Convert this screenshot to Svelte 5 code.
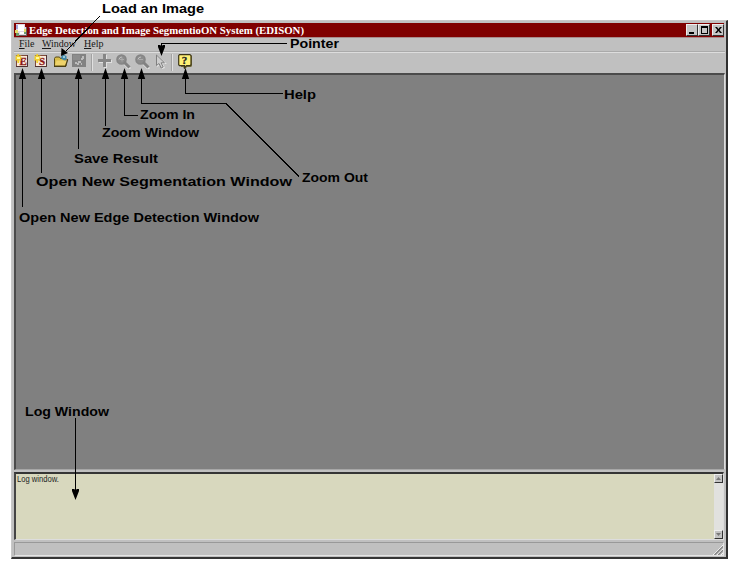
<script>
  const labels = [
    ['Load an Image', 102, 13, 102],
    ['Pointer', 290, 48, 49],
    ['Help', 284, 99, 32],
    ['Zoom In', 140, 119, 55],
    ['Zoom Window', 102, 137, 97],
    ['Save Result', 74, 163, 84],
    ['Open New Segmentation Window', 36, 186, 256],
    ['Zoom Out', 302, 182, 66],
    ['Open New Edge Detection Window', 19, 222, 240],
    ['Log Window', 25, 416, 84]
  ];
  const lines = [
    'M22.5 207V76', 'M41.5 173V76', 'M78.5 149V76', 'M105.5 126V76',
    'M138 115.5H124.5V76', 'M299 176.5L226 103.5H141.5V76',
    'M283 93.5H185.5V76', 'M287 43.5H161.5V50', 'M100 16L66 51', 'M75.5 418V492'
  ];
  const upArrows = [22.5, 41.5, 78.5, 105.5, 124.5, 141.5, 185.5];
</script>

<main>
  <div class="window">
    <header class="titlebar">
      <svg class="appicon" width="13" height="12" viewBox="0 0 13 12">
        <path fill="#e3d8e4" d="M1 0h9v3h2v8H3V9H1z" /><path fill="#fff" d="M3 1h6v6H3zM5 8h5v2H5z" />
        <path fill="#a5aadc" d="M1 1h2v4H1z" /><path fill="#e4dc68" d="M0 6h3v3H0zM9 5h2v3H9z" />
        <path fill="#6e9c70" d="M1 9h3v3H1zM9 8h2v2H9z" /><path fill="#665c5c" d="M11 3h1v8h-1zM4 11h8v1H4z" />
      </svg>
      <svg class="title" width="280" height="14"><text x="0" y="11" textLength="275" lengthAdjust="spacingAndGlyphs">Edge Detection and Image SegmentioON System (EDISON)</text></svg>
      <div class="controls">
        <button aria-label="Minimize"><svg viewBox="0 0 9 8"><path d="M1 6h5v2H1z" /></svg></button>
        <button aria-label="Maximize"><svg viewBox="0 0 9 8"><path fill-rule="evenodd" d="M1 0h7v8H1zM2 2v5h5V2z" /></svg></button>
        <button class="close" aria-label="Close"><svg viewBox="0 0 9 8"><path d="M1 1h2l1.5 2L6 1h2L5.5 4 8 7H6L4.5 5 3 7H1l2.5-3z" /></svg></button>
      </div>
    </header>
    <nav>
      <span class="file"><u>F</u>ile</span><span class="win"><u>W</u>indow</span><span><u>H</u>elp</span>
    </nav>
    <div class="toolbar">
      {#each ['E', 'S'] as letter}
        <span class="tool"><svg width="14" height="14" viewBox="0 0 14 14">
          <path fill="#fbead8" stroke="#7d4a3c" d="M1.5 1.5h11v11h-11z" />
          <path stroke="#4d3030" fill="none" d="M1 12.5h11.5V1" />
          <text x={letter === 'E' ? 4.6 : 5} y="11" class="letter">{letter}</text>
          <path fill="#f0d02f" d="M2.5 0h1.5l.5 2 2-1-1 2.3 2 .7-2 1 1 2-2-.7-.5 2.7H2.5L2 6.3 0 7l.8-2L0 4l1-1-.8-2L2 2z" />
          <path fill="#fff8a0" d="M2 3h3v2H2z" />
        </svg></span>
      {/each}
      <span class="tool folder"><svg width="16" height="14" viewBox="0 0 16 14">
        <path fill="#d9bd4a" stroke="#584b16" d="M1.5 12V4.5l1-1.5h4l1 1.5H13V12z" />
        <path fill="#efd36a" d="M2 11.5l1.5-5H14l-2 5z" />
        <path fill="none" stroke="#4a3e12" stroke-width="1.2" d="M1 12.4h11.5l2-6V5" />
        <path fill="#3f86a8" d="M8 3l2-2.5L13.5 2v3l-2 1.500L8.500 5z" /><path fill="#9cc9d5" d="M10 2h2v2h-2z" />
      </svg></span>
      <span class="tool save"><svg width="14" height="14" viewBox="0 0 14 14">
        <path fill="#828282" d="M0 0h14v13H0z" /><path fill="#8d8d8d" d="M1 1h7v5H1z" />
        <path fill="#bcbcbc" d="M10 2h2v3h-2zM9 4h2v2H9zM6 7h3v2H6zM3 8h2v2H3zM5 9h2v2H5zM9 9h1v2H9z" />
      </svg></span>
      <i class="sep"></i>
      <span class="tool plus"><svg width="14" height="14" viewBox="0 0 14 14">
        <path fill="#e0e0e0" d="M6 1h3v5h5v3H9v5H6V9H1V6h5z" /><path fill="#868686" d="M5 0h3v5h5v3H8v5H5V8H0V5h5z" />
      </svg></span>
      {#each [true, false] as zoomIn}
        <span class="tool lens"><svg width="15" height="15" viewBox="0 0 15 15">
          <path stroke="#e2e2e2" stroke-width="3" d="M9 10l5 5" />
          <circle cx="5.5" cy="5.5" r="4.5" fill="#8c8c8c" stroke="#858585" stroke-width="1.6" />
          <path stroke="#828282" stroke-width="3" d="M8 8l5.5 5.5" />
          <path stroke="#c2c2c2" fill="none" d="M3 5.500a3 3 0 0 1 3-2.500" />
          <path stroke="#aaa" d={zoomIn ? 'M4 5.5h4M6 3.5v4' : 'M4 5.5h4'} />
        </svg></span>
      {/each}
      <span class="tool pointer"><svg width="12" height="15" viewBox="0 0 12 15">
        <path fill="#e4e4e4" d="M2 1v12l3-2 2 4 3-1-2-4h4z" />
        <path fill="#cecece" stroke="#808080" d="M1.5 1v10.5l2.5-2L6.2 14l2-1-2.1-4.2h3.400z" />
      </svg></span>
      <i class="sep second"></i>
      <span class="tool help"><svg width="14" height="15" viewBox="0 0 14 15">
        <path fill="#77713f" d="M2 1h11l1 1v10l-1 1H9l-2 2-2-2H3z" />
        <path fill="#fff176" stroke="#3c3519" stroke-width="1.2" d="M1.500 .7H12l1 1v9l-1 1H8.500L6.500 14v-2.300h-5l-.8-1V1.600z" />
        <text x="3.8" y="10.2" class="question">?</text>
      </svg></span>
    </div>
    <section class="workspace"></section>
    <section class="log">
      <svg class="logtext" width="60" height="14"><text x="1" y="9" textLength="42" lengthAdjust="spacingAndGlyphs">Log window.</text></svg>
      <div class="scroll">
        <span><svg width="5" height="3" viewBox="0 0 5 3"><path d="M0 3l2.5-3L5 3z" /></svg></span>
        <span><svg width="5" height="3" viewBox="0 0 5 3"><path d="M0 0h5L2.5 3z" /></svg></span>
      </div>
    </section>
    <footer>
      <svg width="10" height="10" viewBox="0 0 10 10"><path stroke="#f4f4f4" d="M0 10L10 0M4 10l6-6M8 10l2-2" /><path stroke="#808080" stroke-width="1.2" d="M1.5 10L10 1.5M5.2 10L10 5.2" /></svg>
    </footer>
  </div>

  <svg class="callouts" width="740" height="570">
    {#each lines as d}<path class="line" {d} />{/each}
    {#each upArrows as x}<path d="M{x} 68L{x + 3.7} 79H{x - 3.7}z" />{/each}
    <path d="M161.5 56L158 47V45h2l1.5 1 1.5-1h2v2z" />
    <path d="M61 56L61.5 48l6.500 5z" />
    <path d="M75.5 500L72 491v-2h2l1.5 1 1.5-1h2v2z" />
    {#each labels as [label, x, y, width]}
      <text {x} {y} textLength={width} lengthAdjust="spacingAndGlyphs">{label}</text>
    {/each}
  </svg>
</main>

<style>
  :global(body) { margin: 0; background: #fff; }
  main { position: relative; width: 740px; height: 570px; padding: 20px 0 0 11px; box-sizing: border-box; overflow: hidden; }
  .window { box-sizing: border-box; width: 717px; height: 539px; padding: 1px 1px 0 2px; background: #c0c0c0; border: 1px solid #c8c8c8; border-right: 2px solid #303030; border-bottom: 2px solid #353535; display: flex; flex-direction: column; }
  .titlebar { height: 15px; flex: none; margin: 1px 1px 0 0; background: #800000; display: flex; align-items: center; border-bottom: 1px solid #a98c8c; box-sizing: border-box; }
  .appicon { margin-left: 1px; }
  .title { margin-left: 1px; overflow: visible; }
  .title text { font: bold 11px "Liberation Serif", serif; fill: #fff; }
  .controls { margin-left: auto; display: flex; }
  button { width: 12px; height: 12px; padding: 0; border: 1px solid #eee; border-right-color: #333; border-bottom-color: #333; background: #c6c6c6; display: flex; align-items: center; justify-content: center; border-radius: 0; box-sizing: border-box; }
  button svg { width: 9px; height: 8px; flex: none; }
  .close { margin-left: 2px; }
  nav { height: 13px; flex: none; box-sizing: border-box; padding-left: 5px; display: flex; font: 10px/12px "Liberation Serif", serif; color: #181818; }
  .file { width: 23px; } .win { width: 42px; }
  nav u { text-underline-offset: 1px; text-decoration-thickness: 1px; }
  .toolbar { height: 22px; flex: none; border-top: 1px solid #aaa; box-shadow: inset 0 1px #ddd; display: flex; align-items: flex-start; padding: 1px 0 0 1px; box-sizing: border-box; }
  .tool { width: 19px; height: 16px; flex: none; display: flex; align-items: center; }
  .letter { font: bold 11px "Liberation Serif", serif; fill: #8b1616; stroke: #8b1616; stroke-width: .3px; }
  .question { font: bold 11px "Liberation Serif", serif; fill: #222; stroke: #222; stroke-width: .3px; }
  .save { width: 17px; }
  .sep { width: 1px; height: 17px; border-right: 1px solid #e0e0e0; background: #a2a2a2; margin: 1px 5px 0 2px; flex: none; }
  .plus { width: 18px; }
  .pointer { width: 15px; padding-left: 1px; }
  .second { margin: 1px 5px 0 1px; }
  .workspace { height: 397px; flex: none; box-sizing: border-box; background: #808080; border: 1px solid #606060; border-left: 2px solid #4b4b4b; border-top: 2px solid #4b4b4b; border-bottom-color: #a7a7a7; border-right-color: #ddd; }
  .log { height: 68px; flex: none; margin: 2px 1px 0 0; box-sizing: border-box; background: #d8d8be; border: 1px solid #ddd; border-left: 2px solid #444; border-top: 2px solid #353535; display: flex; justify-content: space-between; }
  .logtext { margin-top: -1px; }
  .logtext text { font: 8.5px "Liberation Sans", sans-serif; fill: #242424; }
  .scroll { width: 9px; background: #e1e1df; display: flex; flex-direction: column; justify-content: space-between; }
  .scroll span { height: 9px; box-sizing: border-box; background: #c3c3c3; border: 1px solid #eee; border-right-color: #333; border-bottom-color: #333; display: flex; justify-content: center; align-items: center; }
  .scroll path { fill: #777; }
  footer { height: 14px; flex: none; margin: 2px 1px 0 0; border: 1px solid #999; border-bottom-color: #e4e4e4; border-right-color: #e4e4e4; box-sizing: border-box; display: flex; justify-content: flex-end; align-items: flex-end; }
  .callouts { position: absolute; inset: 0; pointer-events: none; }
  .callouts .line { fill: none; stroke: #000; stroke-width: 1; shape-rendering: crispEdges; }
  .callouts text { font: bold 13.5px "Liberation Sans", sans-serif; fill: #000; }
</style>
